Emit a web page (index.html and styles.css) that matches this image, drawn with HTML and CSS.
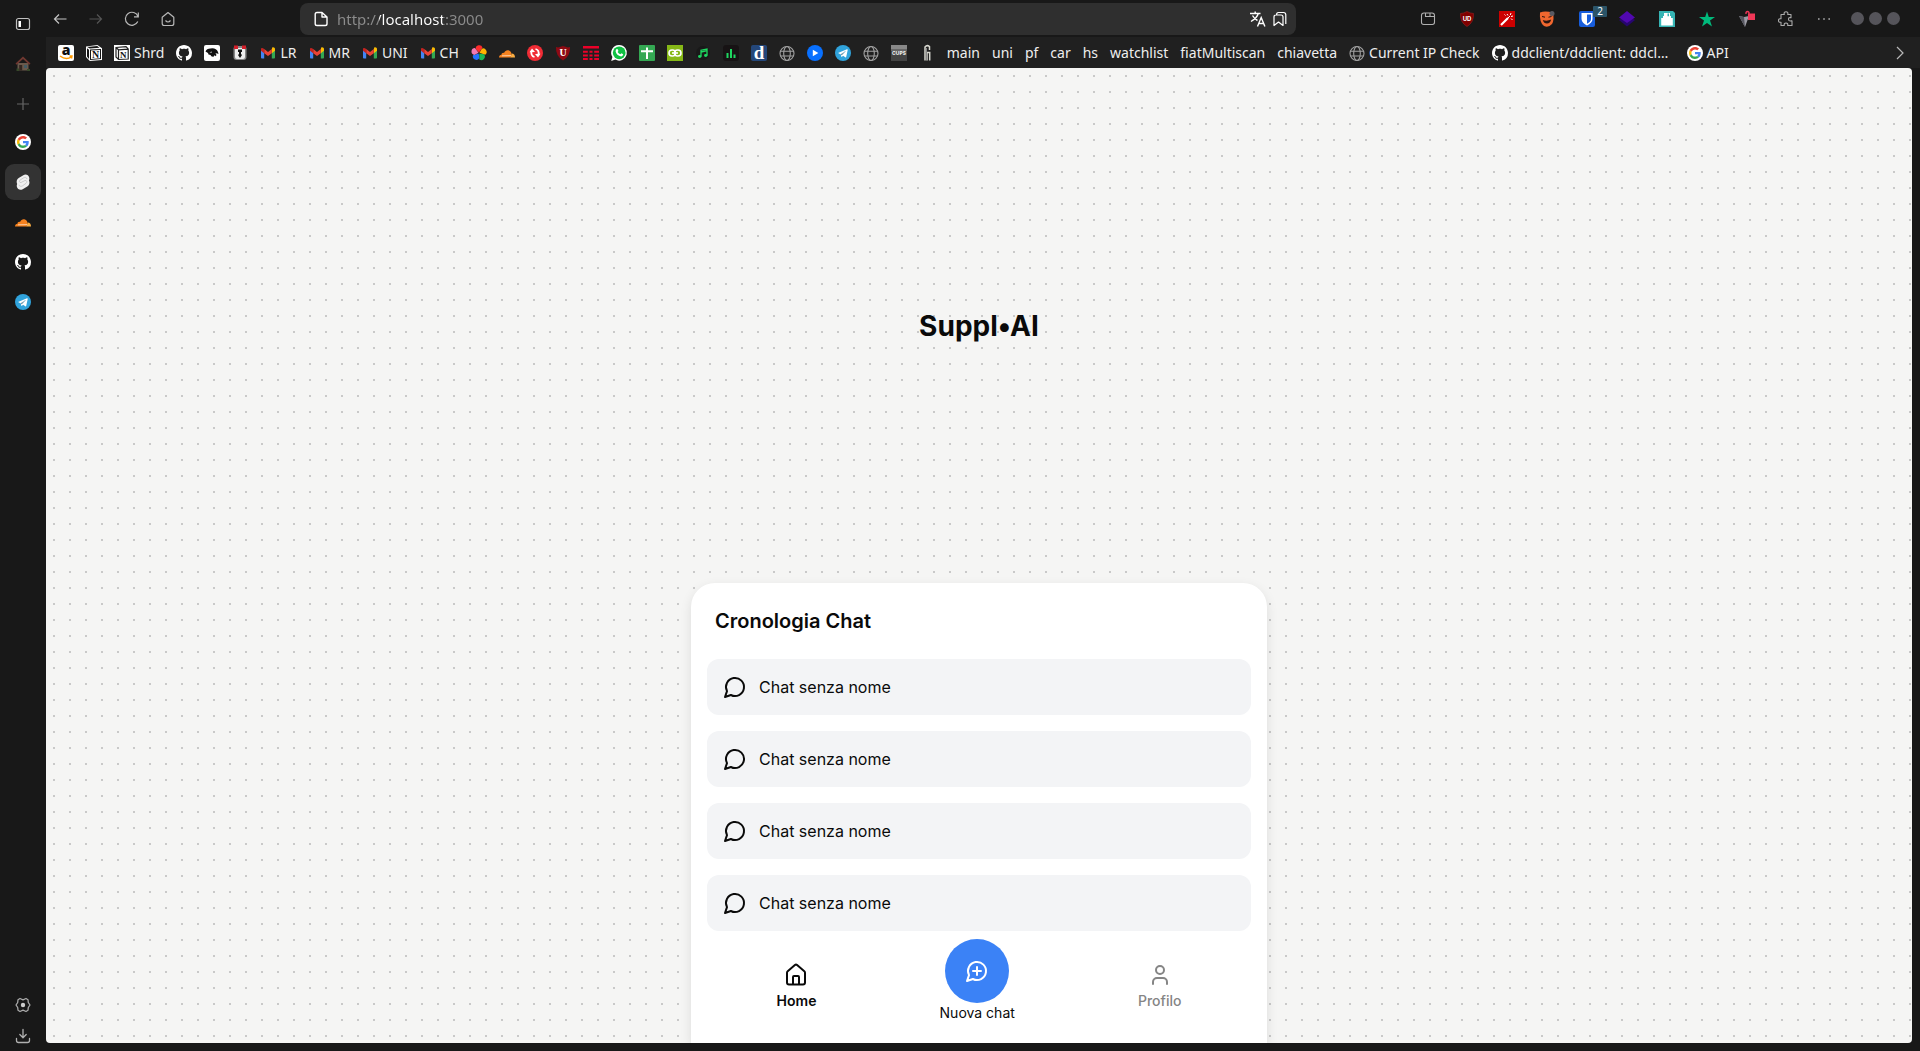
FILE: index.html
```html
<!DOCTYPE html>
<html lang="it">
<head>
<meta charset="utf-8">
<meta name="viewport" content="width=device-width, initial-scale=1">
<title>Suppl•AI</title>
<link rel="stylesheet" href="styles.css">
</head>
<body>
<svg class="sprite" aria-hidden="true">
  <symbol id="i-github" viewBox="0 0 16 16"><path fill="#fff" d="M8 0C3.58 0 0 3.58 0 8c0 3.54 2.29 6.53 5.47 7.59.4.07.55-.17.55-.38 0-.19-.01-.82-.01-1.49-2.01.37-2.53-.49-2.69-.94-.09-.23-.48-.94-.82-1.13-.28-.15-.68-.52-.01-.53.63-.01 1.08.58 1.23.82.72 1.21 1.87.87 2.33.66.07-.52.28-.87.51-1.07-1.78-.2-3.64-.89-3.64-3.95 0-.87.31-1.59.82-2.15-.08-.2-.36-1.02.08-2.12 0 0 .67-.21 2.2.82.64-.18 1.32-.27 2-.27s1.36.09 2 .27c1.53-1.04 2.2-.82 2.2-.82.44 1.1.16 1.92.08 2.12.51.56.82 1.27.82 2.15 0 3.07-1.87 3.75-3.65 3.95.29.25.54.73.54 1.48 0 1.07-.01 1.93-.01 2.2 0 .21.15.46.55.38A8.01 8.01 0 0 0 16 8c0-4.42-3.58-8-8-8z"/></symbol>
  <symbol id="i-google" viewBox="0 0 64 64"><circle cx="32" cy="32" r="32" fill="#fff"/><g transform="translate(8 8)"><path fill="#EA4335" d="M24 9.5c3.54 0 6.71 1.22 9.21 3.6l6.85-6.85C35.9 2.38 30.47 0 24 0 14.62 0 6.51 5.38 2.56 13.22l7.98 6.19C12.43 13.72 17.74 9.5 24 9.5z"/><path fill="#4285F4" d="M46.98 24.55c0-1.57-.15-3.09-.38-4.55H24v9.02h12.94c-.58 2.96-2.26 5.48-4.78 7.18l7.73 6c4.51-4.18 7.09-10.36 7.09-17.65z"/><path fill="#FBBC05" d="M10.53 28.59c-.48-1.45-.76-2.99-.76-4.59s.27-3.14.76-4.59l-7.98-6.19C.92 16.46 0 20.12 0 24s.92 7.54 2.56 10.78l7.97-6.19z"/><path fill="#34A853" d="M24 48c6.48 0 11.93-2.13 15.89-5.81l-7.73-6c-2.15 1.45-4.92 2.3-8.16 2.3-6.26 0-11.57-4.22-13.47-9.91l-7.98 6.19C6.51 42.62 14.62 48 24 48z"/></g></symbol>
  <symbol id="i-gmail" viewBox="0 0 16 16"><path fill="#4285F4" d="M1 3.5v9.2c0 .5.4.8.8.8h2.4V7z"/><path fill="#34A853" d="M15 3.5v9.2c0 .5-.4.8-.8.8h-2.4V7z"/><path fill="#FBBC04" d="M11.8 4v4.2L15 5.700V4.200c0-1.600-1.700-2.400-2.900-1.500z"/><path fill="#EA4335" d="M4.200 4v4.200L8 11l3.800-2.800V4L8 6.900z"/><path fill="#C5221F" d="M1 4.200v1.500l3.200 2.500V4l-.4-.3C2.600 2.700 1 2.700 1 4.200z"/></symbol>
  <symbol id="i-cloud" viewBox="0 0 16 16"><path fill="#F6821F" d="M0 12.500c0-1.600 1-2.700 2.500-2.800C2.500 8.300 3.900 7.500 5 8c1-2.300 2.600-3 4.300-2.700 1.800.3 3 1.700 3.200 3.500l-.9 3.700z"/><path fill="#FBAD41" d="M12.700 8.500c2 0 3.300 1.600 3.300 4h-4.600z"/><path stroke="#fff" stroke-width=".6" d="m3 10.800 9-.2"/></symbol>
  <symbol id="i-telegram" viewBox="0 0 16 16"><circle cx="8" cy="8" r="8" fill="#30A3DC"/><path fill="#fff" d="m3 8 9-3.700c.5-.2.8.1.700.7l-1.500 7c-.1.500-.5.600-.9.300L8 10.700l-1.200 1.200c-.3.200-.5.100-.5-.3l-.3-2z"/><path stroke="#A9D5EC" stroke-width=".8" d="m6 9.300 4.500-3L7 10"/></symbol>
  <symbol id="i-globe" viewBox="0 0 16 16"><g fill="none" stroke="#a0a0a0" stroke-width="1.100"><circle cx="8" cy="8.500" r="7"/><ellipse cx="8" cy="8.500" rx="3.300" ry="7"/><path d="M1.500 6.200h13M1.500 11h13"/></g></symbol>
  <symbol id="i-chat" viewBox="0 0 24 24"><path fill="none" stroke="currentColor" stroke-width="2" stroke-linecap="round" stroke-linejoin="round" d="M7.900 20A9 9 0 1 0 4 16.100L2 22Z"/></symbol>
</svg>

<aside class="sidebar">
  <button class="tool" aria-label="Barra laterale"><svg class="ico" viewBox="0 0 16 16"><rect x="1.500" y="2.500" width="13" height="11" rx="2" fill="none" stroke="#c0c0c0" stroke-width="1.200"/><path fill="#fff" d="M3.500 5H6v6H3.500z"/></svg></button>
  <button class="tool" aria-label="Casa"><svg class="ico dim" viewBox="0 0 16 16"><path fill="#b99a80" d="M2.500 7h11v7.500h-11z"/><path fill="#c8584a" d="M8 .5 15.500 7.500l-1.200 1.200L8 3 1.700 8.700.5 7.500z"/><path fill="#4f3528" d="M4.200 9h3v5.500h-3z"/><path fill="#6f9db0" d="M9 9h3v3H9z"/><path fill="#567a3c" d="M1.500 12.500H4V15H1.500zM12 13h3v2h-3z"/></svg></button>
  <button class="tool" aria-label="Nuova scheda"><svg class="ico" viewBox="0 0 16 16"><path stroke="#666" stroke-width="1.200" d="M8 2v12M2 8h12"/></svg></button>
  <nav class="tabs" aria-label="Schede">
    <button class="tab" aria-label="Google"><svg class="ico"><use href="#i-google"/></svg></button>
    <button class="tab active" aria-label="Suppl•AI"><svg class="ico" viewBox="0 0 16 16"><path fill="#f0f0f0" d="M8.300 1.200c2.300-1.300 5.300-.4 5.900 2.300.3 1.200.1 2-.3 2.900.7 1.400.6 2.500.3 3.700-.3 1.100-1 1.800-1.900 2.300l-4.600 2.800c-2.500 1.300-5.200.3-5.800-2.400-.3-1.200-.1-2 .3-2.900-.7-1.400-.6-2.500-.3-3.700.3-1 .9-1.600 1.800-2.200z"/><path fill="none" stroke="#bbb" stroke-width=".7" d="M12 5c-.5-1.800-2-2-3.200-1.300L5 6.100c-1.200.9-.5 2.900 1 2.400l4-2c2-.4 2.400 1.800 1 2.800L7.300 12c-1.500.7-3 .2-3.300-1.200"/></svg></button>
    <button class="tab" aria-label="Cloudflare"><svg class="ico"><use href="#i-cloud"/></svg></button>
    <button class="tab" aria-label="GitHub"><svg class="ico"><use href="#i-github"/></svg></button>
    <button class="tab" aria-label="Telegram"><svg class="ico"><use href="#i-telegram"/></svg></button>
  </nav>
  <div class="sidebar-end">
    <button class="end-tool" aria-label="Impostazioni"><svg class="ico" viewBox="0 0 16 16"><path fill="none" stroke="#aaa" stroke-width="1.300" stroke-linejoin="round" d="M5 1.500 8 2.800l3-1.300 2 1.200.3 2.800L15 8l-1.700 2.500-.3 2.800-2 1.200-3-1.300-3 1.300-2-1.200-.3-2.800L1 8l1.700-2.500L3 2.700z"/><circle cx="8" cy="8" r="2.200" fill="#ccc"/></svg></button>
    <button class="end-tool" aria-label="Download"><svg class="ico" viewBox="0 0 16 16"><path fill="none" stroke="#b0b0b0" stroke-width="1.300" stroke-linecap="round" stroke-linejoin="round" d="M8 1.500v8M4.800 6.500 8 9.700l3.200-3.200M1.500 10.500v2q0 2 2 2h9q2 0 2-2v-2"/></svg></button>
  </div>
</aside>

<div class="window">
  <header class="toolbar">
    <div class="nav-buttons">
      <button aria-label="Indietro"><svg class="ico" viewBox="0 0 16 16"><path fill="none" stroke="#c4c4c4" stroke-width="1.200" d="M14.500 8h-12M7 3.500 2.500 8 7 12.500"/></svg></button>
      <button aria-label="Avanti"><svg class="ico" viewBox="0 0 16 16"><path fill="none" stroke="#555" stroke-width="1.200" d="M1.500 8h12M9 3.500 13.500 8 9 12.500"/></svg></button>
      <button aria-label="Ricarica"><svg class="ico" viewBox="0 0 16 16"><path fill="none" stroke="#b8b8b8" stroke-width="1.200" d="M13.800 10.500A6.500 6.500 0 1 1 14 5.500M14.300 1.500v4.300H10"/></svg></button>
      <button aria-label="Home"><svg class="ico" viewBox="0 0 16 16"><path fill="none" stroke="#b8b8b8" stroke-width="1.200" stroke-linejoin="round" d="M2.200 6.200 8 1.500l5.800 4.700v6.300q0 2-2 2H4.200q-2 0-2-2zM5.500 9.500q2.500 3 5 0"/></svg></button>
    </div>
    <div class="address">
      <svg class="ico" viewBox="0 0 16 16"><path fill="none" stroke="#fff" stroke-width="1.400" stroke-linejoin="round" d="M4 1.500h5L14 6v6.700q0 1.800-1.800 1.800H4q-1.800 0-1.800-1.800V3.300Q2.200 1.500 4 1.500zM9 1.500V6h5"/></svg>
      <input class="url" type="text" value="http://localhost:3000" aria-label="Indirizzo">
      <button aria-label="Traduci"><svg class="ico" viewBox="0 0 16 16"><path fill="none" stroke="#fff" stroke-width="1.400" d="M0 2.500h10.500M5.200.5v2M8.300 2.500Q7 7 1 10.500M2.500 4.500q2 3.500 5 5M7.500 15.500l3.700-9 3.700 9M8.700 12.500h5"/></svg></button>
      <button aria-label="Segnalibri"><svg class="ico" viewBox="0 0 16 16"><path fill="none" stroke="#fff" stroke-width="1.200" stroke-linejoin="round" d="M2 14.500V6q0-2 2-2h5q2 0 2 2v8.500L6.500 11zM4.500 4q0-2.500 2-2.500h5q2.300 0 2.300 2.300V13"/></svg></button>
    </div>
    <div class="extensions">
      <button class="narrow" aria-label="Raccolte"><svg class="ico" viewBox="0 0 16 16"><path fill="none" stroke="#b0b0b0" stroke-width="1.100" d="M4 2h8q2.500 0 2.500 2.500v6.800q0 2.200-2.200 2.200H3.700q-2.200 0-2.200-2.200V4.500Q1.500 2 4 2zM5.500 2v3.500h9M10 2v3.500"/></svg></button>
      <button aria-label="uBlock"><svg class="ico" viewBox="0 0 16 16"><path fill="#800000" stroke="#9a2020" stroke-width=".6" d="M8 .5Q11 2.300 14.500 2.500q.5 9-6.500 13-7-4-6.500-13Q5 2.300 8 .5z"/><text x="8" y="10" text-anchor="middle" font-family="Inter, sans-serif" font-weight="700" font-size="6" fill="#fff">UD</text></svg></button>
      <button aria-label="Bacchetta"><svg class="ico" viewBox="0 0 16 16"><path fill="#c00" d="M0 0h16v16H0z"/><path stroke="#fff" stroke-width="2.200" d="m2 14 7-7"/><path stroke="#fff" d="m9 7 2-2M8 3l1 1.500M12 2l-.7 2M14 5l-2 .5M13.500 9 12 7.500M5.500 3.500l1 1"/></svg></button>
      <button aria-label="Maschera"><svg class="ico" viewBox="0 0 16 16"><path fill="#F0672F" d="M1 1.500Q7-.5 14 2q1.500 7-1 11-3.500 4-8 2Q.2 11.500 1 1.500z"/><path fill="none" stroke="#2a1510" stroke-width="1" d="m3 5.500 3 .7M9.500 6.200l3-.7"/><path fill="#2a1510" d="M3.800 9q4.200 1.500 8.400-.5-1 4-4.200 4T3.800 9z"/><circle cx="13" cy="2.500" r="2.500" fill="#5a5a62"/></svg></button>
      <button class="with-badge" aria-label="Bitwarden, 2 elementi"><svg class="ico" viewBox="0 0 16 16"><rect width="16" height="16" rx="2" fill="#175DDC"/><path fill="#fff" d="M2.500 2h11v6c0 3-2.500 5-5.500 6.500C5 13 2.500 11 2.500 8z"/><path fill="#175DDC" d="M8 3.500h4V8c0 2-1.700 3.500-4 4.800z"/></svg><span class="badge">2</span></button>
      <button aria-label="Livelli"><svg class="ico" viewBox="0 0 16 16"><path fill="#27066f" d="m8 4 8 5-8 6.500L0 9z"/><path fill="#5108b0" d="m8 0 8 6.500L8 12 0 6.500z"/></svg></button>
      <button aria-label="Salva"><svg class="ico" viewBox="0 0 16 16"><path fill="#36B4B4" d="M0 0h14l2 2v14H0z"/><path fill="#fff" d="M2.200 7h11.600v7.500H2.200zM4 5h8v3H4z"/><path fill="#fff" d="M5 2h6v4H5z"/><path fill="#36B4B4" d="M8.500 2.500H10v2.800H8.500z"/></svg></button>
      <button aria-label="Preferiti"><svg class="ico" viewBox="0 0 16 16"><path fill="#00BA7C" d="m8 .5 1.800 5.600H16l-5 3.500 2 6L8 12l-5 3.600 2-6L0 6.100h6.200z"/></svg></button>
      <button aria-label="Sblocco"><svg class="ico" viewBox="0 0 16 16"><path fill="#9b9ba4" d="m0 5 5 1 5-1-4 11z"/><path fill="#55555e" d="m0 5 5 1 1 10z"/><path fill="#f03757" d="M9 2.500h7V9H9z"/><path fill="none" stroke="#f03757" stroke-width="1.300" d="M10 3V1.500Q8.500-.5 7 1.500V3"/></svg></button>
      <button class="narrow" aria-label="Estensioni"><svg class="ico" viewBox="0 0 16 16"><path fill="none" stroke="#aaa" stroke-width="1.100" stroke-linejoin="round" d="M3 3.500h3.300Q5.500.8 8 .8t1.700 2.700H13v3.200q-2.500-.5-2.500 1.500T13 9.900h1v4.600H9.700q.5-2.500-1.700-2.500t-1.700 2.500H3v-3.300q-2.500.5-2.500-1.700T3 7.800z"/></svg></button>
      <button class="narrow" aria-label="Altro"><svg class="ico" viewBox="0 0 16 16"><path fill="#aaa" d="M2 7.200h1.600v1.600H2zm5.200 0h1.600v1.600H7.200zm5.200 0H14v1.600h-1.600z"/></svg></button>
    </div>
    <div class="window-buttons">
      <button aria-label="Riduci"></button><button aria-label="Ingrandisci"></button><button aria-label="Chiudi"></button>
    </div>
  </header>

  <nav class="bookmarks" aria-label="Segnalibri">
    <a href="#" aria-label="Amazon"><svg class="ico" viewBox="0 0 16 16"><rect width="16" height="16" rx="2" fill="#fff"/><text x="8" y="10" text-anchor="middle" font-family="Open Sans, sans-serif" font-weight="800" font-size="14" fill="#111">a</text><path fill="none" stroke="#f90" stroke-width="1.400" d="M2 11q6 4.500 11.500.8M11.500 11h2.500l-.5 2.500"/></svg></a>
    <a href="#" aria-label="Notion"><svg class="ico" viewBox="0 0 16 16"><path fill="#fff" d="M0 1.500 11.500 0 16 3.200V15L3.800 16 0 12z"/><path fill="#161616" d="m1.300 2 9.900-.9 2.300 1.600-9.700.7zM1 3.200l2 1.500v9.200l-2-2.300zM4 4.600l11-.7v10.200L4 15z"/><path fill="#fff" d="m5 5.500 9-.6v8.400l-9 .7z"/><text x="9.500" y="13" text-anchor="middle" font-family="Liberation Serif, serif" font-weight="700" font-size="10" fill="#111">N</text></svg></a>
    <a href="#"><svg class="ico" viewBox="0 0 16 16"><path fill="#fff" d="M0 0h16v16H0z"/><path fill="none" stroke="#222" stroke-width="1.200" d="m2 2.500 10-.8L14.200 4v10l-9.700.5L2 12zM4.500 4.800l9.500-.6M4.500 4.800v9.700M2 2.500l2.500 2.300"/><text x="9.300" y="12.500" text-anchor="middle" font-family="Liberation Serif, serif" font-weight="700" font-size="9" fill="#111">N</text></svg>Shrd</a>
    <a href="#" aria-label="GitHub"><svg class="ico"><use href="#i-github"/></svg></a>
    <a href="#" aria-label="Cavallo"><svg class="ico" viewBox="0 0 16 16"><rect width="16" height="16" rx="2" fill="#fff"/><path fill="#111" d="M1.500 6.500Q2.500 3.500 6.500 3.500q5.500-1 7.500 3.500l.5 2q-1.500-1-3-.8 1.500 1.500.5 3l-1.500-1-1 1.500Q7 12 6.500 10L4.500 9.500 4 8z"/><path fill="#fff" d="m5.500 7.500 2-1 .5 1z"/></svg></a>
    <a href="#" aria-label="Robot"><svg class="ico" viewBox="0 0 16 16"><rect x="1.500" y="1" width="13" height="14" rx="3" fill="#888"/><rect x="3" y="3" width="10" height="11" rx="2" fill="#eee"/><path fill="#d3202b" d="M2 .5h4v3.500H2zM10 .5h4v3.500h-4z"/><path fill="#111" d="M6 4.500h4V7H9v2l1 1-2 3-2-3 1-1V7H6z"/></svg></a>
    <a href="#"><svg class="ico"><use href="#i-gmail"/></svg>LR</a>
    <a href="#"><svg class="ico"><use href="#i-gmail"/></svg>MR</a>
    <a href="#"><svg class="ico"><use href="#i-gmail"/></svg>UNI</a>
    <a href="#"><svg class="ico"><use href="#i-gmail"/></svg>CH</a>
    <a href="#" aria-label="Foto"><svg class="ico" viewBox="0 0 16 16"><path fill="#ff2b2b" d="M8 7.500 4.700 4A3.500 3.500 0 0 1 11.500 2.600z"/><path fill="#ffb400" transform="rotate(72 8 8)" d="M8 7.500 4.700 4A3.500 3.500 0 0 1 11.500 2.600z"/><path fill="#1db954" transform="rotate(144 8 8)" d="M8 7.500 4.700 4A3.500 3.500 0 0 1 11.500 2.600z"/><path fill="#2372ff" transform="rotate(216 8 8)" d="M8 7.500 4.700 4A3.500 3.500 0 0 1 11.500 2.600z"/><path fill="#f07ab4" transform="rotate(288 8 8)" d="M8 7.500 4.700 4A3.500 3.500 0 0 1 11.500 2.600z"/></svg></a>
    <a href="#" aria-label="Cloudflare"><svg class="ico"><use href="#i-cloud"/></svg></a>
    <a href="#" aria-label="Sincronia"><svg class="ico" viewBox="0 0 16 16"><circle cx="8" cy="8" r="8" fill="#f02c35"/><path fill="none" stroke="#fff" stroke-width="1.800" d="M7.500 12q-4-1-3-6M8.500 4q4 1 3 6"/><path fill="#fff" d="M2.500 7.200 5 3.500 8 7zM13.500 8.800 11 12.500 8 9z"/></svg></a>
    <a href="#" aria-label="Scudo"><svg class="ico" viewBox="0 0 16 16"><path fill="#8e0a13" d="m1 2 2 .5L8 1l5 1.500L15 2q.5 9-7 13.500Q.5 11 1 2z"/><text x="8" y="11" text-anchor="middle" font-family="Liberation Serif, serif" font-weight="700" font-size="10" fill="#fff">U</text></svg></a>
    <a href="#" aria-label="TIM"><svg class="ico" viewBox="0 0 16 16"><path fill="#eb0028" d="M0 1h16v2.600H0zM0 5.700h4.800v2.100H0zm6.500 0h3v2.100h-3zm4.700 0H16v2.100h-4.800zM0 9.500h4.800v2H0zm6.500 0h3v2h-3zm4.700 0H16v2h-4.800zM0 13h4.800v2H0zm6.500 0h3v2h-3zm4.700 0H16v2h-4.800z"/></svg></a>
    <a href="#" aria-label="WhatsApp"><svg class="ico" viewBox="0 0 16 16"><path fill="#fff" d="M8.200 0a7.800 7.800 0 1 1-3.900 14.600L.2 16l1.200-4A7.800 7.800 0 0 1 8.200 0z"/><circle cx="8.200" cy="7.800" r="6.400" fill="#0fc143"/><path fill="#fff" d="M5 4.500q1.300-1.200 2 .2l.4 1.200-.8 1q1.200 2 2.800 2.400l1-1 1.800 1q-.2 2-2 2.100Q5.500 10.500 4.600 6.200z"/></svg></a>
    <a href="#" aria-label="Fogli"><svg class="ico" viewBox="0 0 16 16"><rect width="16" height="16" rx="1" fill="#34a853"/><path fill="#fff" d="M2 5.200h12v2H2zM7 2.500h2v11.500H7z"/></svg></a>
    <a href="#" aria-label="Catena"><svg class="ico" viewBox="0 0 16 16"><path fill="#86b817" d="M0 0h16v16H0z"/><g fill="none" stroke="#fff" stroke-width="1.600"><rect x="2" y="5" width="6.500" height="6" rx="3"/><rect x="7.500" y="5" width="6.500" height="6" rx="3"/><path d="M5 8h6"/></g></svg></a>
    <a href="#" aria-label="Musica"><svg class="ico" viewBox="0 0 16 16"><circle cx="8" cy="8" r="7" fill="#191919"/><path fill="none" stroke="#1ed760" stroke-width="1.300" d="M6 11.500V5.200L12 4v6.500M6 7l6-1.300"/><g fill="#1ed760"><ellipse cx="4.700" cy="11.500" rx="1.700" ry="1.400"/><ellipse cx="10.700" cy="10.500" rx="1.700" ry="1.400"/></g></svg></a>
    <a href="#" aria-label="Statistiche"><svg class="ico" viewBox="0 0 16 16"><rect width="16" height="16" rx="3" fill="#171314"/><path fill="#1ed760" d="M3.500 8h2v5h-2zM7 4h2v9H7zM10.500 9.500h2V13h-2z"/></svg></a>
    <a href="#" aria-label="Dizionario"><svg class="ico" viewBox="0 0 16 16"><rect width="16" height="16" rx="2" fill="#24477a"/><text x="8" y="14" text-anchor="middle" font-family="Liberation Serif, serif" font-weight="700" font-size="19" fill="#fff">d</text></svg></a>
    <a href="#" aria-label="Sito"><svg class="ico"><use href="#i-globe"/></svg></a>
    <a href="#" aria-label="Video"><svg class="ico" viewBox="0 0 16 16"><circle cx="8" cy="8" r="8" fill="#0870ff"/><path fill="#fff" d="m5.800 4.800 5.500 3.200-5.500 3.200z"/></svg></a>
    <a href="#" aria-label="Telegram"><svg class="ico"><use href="#i-telegram"/></svg></a>
    <a href="#" aria-label="Sito"><svg class="ico"><use href="#i-globe"/></svg></a>
    <a href="#" aria-label="CUPS"><svg class="ico" viewBox="0 0 16 16"><path fill="#444" d="M0 0h16v16H0z"/><path fill="#888" d="M0 0h16v4H0z"/><path fill="#666" d="M0 4h16v2H0z"/><text x="8" y="10" text-anchor="middle" font-family="Inter, sans-serif" font-weight="800" font-size="5" fill="#eee">CUPS</text></svg></a>
    <a href="#" aria-label="G"><svg class="ico" viewBox="0 0 16 16"><path fill="none" stroke="#d8d8d0" stroke-width="1.500" d="M10.500 5V1.500Q8-.5 6 2v13.500M8 15.500v-8h2.700v8"/><path stroke="#888" d="M7.500 3v12"/></svg></a>
    <a href="#">main</a>
    <a href="#">uni</a>
    <a href="#">pf</a>
    <a href="#">car</a>
    <a href="#">hs</a>
    <a href="#">watchlist</a>
    <a href="#">fiatMultiscan</a>
    <a href="#">chiavetta</a>
    <a href="#"><svg class="ico"><use href="#i-globe"/></svg>Current IP Check</a>
    <a class="long" href="#"><svg class="ico"><use href="#i-github"/></svg>ddclient/ddclient: ddcl…</a>
    <a href="#"><svg class="ico"><use href="#i-google"/></svg>API</a>
    <button class="more" aria-label="Altri segnalibri"><svg class="ico" viewBox="0 0 16 16"><path fill="none" stroke="#b8b8b8" stroke-width="1.200" d="m5 2 6 6-6 6"/></svg></button>
  </nav>

  <div class="page">
    <div class="hero"><h1>Suppl•AI</h1></div>
    <main class="card">
      <h2>Cronologia Chat</h2>
      <div class="chats">
        <button class="chat"><svg class="ico-lg"><use href="#i-chat"/></svg>Chat senza nome</button>
        <button class="chat"><svg class="ico-lg"><use href="#i-chat"/></svg>Chat senza nome</button>
        <button class="chat"><svg class="ico-lg"><use href="#i-chat"/></svg>Chat senza nome</button>
        <button class="chat"><svg class="ico-lg"><use href="#i-chat"/></svg>Chat senza nome</button>
      </div>
      <nav class="dock" aria-label="Navigazione">
        <a class="dock-link current" href="#"><svg class="ico-lg" viewBox="0 0 24 24"><path fill="none" stroke="currentColor" stroke-width="2" stroke-linejoin="round" stroke-linecap="round" d="M15 21.500V14a1 1 0 0 0-1-1h-4a1 1 0 0 0-1 1v7.500M3 9.700a2 2 0 0 1 .7-1.500l7.200-6.100a1.700 1.700 0 0 1 2.200 0l7.200 6.100a2 2 0 0 1 .7 1.500v9.800a2 2 0 0 1-2 2H5a2 2 0 0 1-2-2z"/></svg>Home</a>
        <a class="dock-new" href="#"><span class="dock-circle"><svg class="ico-lg" viewBox="0 0 24 24"><path fill="none" stroke="currentColor" stroke-width="2" stroke-linecap="round" stroke-linejoin="round" d="M7.900 20A9 9 0 1 0 4 16.100L2 22ZM8 12h8M12 8v8"/></svg></span>Nuova chat</a>
        <a class="dock-link" href="#"><svg class="ico-lg" viewBox="0 0 24 24"><path fill="none" stroke="currentColor" stroke-width="2" stroke-linecap="round" stroke-linejoin="round" d="M19 21v-2a4 4 0 0 0-4-4H9a4 4 0 0 0-4 4v2"/><circle cx="12" cy="7" r="4" fill="none" stroke="currentColor" stroke-width="2"/></svg>Profilo</a>
      </nav>
    </main>
  </div>
</div>
</body>
</html>
```

FILE: styles.css
```css
*, *::before, *::after { box-sizing: border-box; }

body {
  margin: 0;
  display: flex;
  height: 100vh;
  background: #181818;
  color: #eee;
  font: 15px/20px "Noto Sans", sans-serif;
}

button {
  border: 0;
  padding: 0;
  background: none;
  color: inherit;
  font: inherit;
  cursor: pointer;
}

a { color: inherit; text-decoration: none; }

.sprite { position: absolute; width: 0; height: 0; }
.ico { display: block; flex: none; width: 16px; height: 16px; overflow: visible; }
.ico-lg { display: block; flex: none; width: 24px; height: 24px; }
.dim { opacity: .5; }

/* Vertical tab strip */
.sidebar {
  display: flex;
  flex-direction: column;
  align-items: center;
  flex: none;
  width: 46px;
  padding-top: 4px;
}
.tool, .tab, .end-tool { display: grid; place-items: center; width: 36px; }
.tool { height: 40px; }
.tabs { display: flex; flex-direction: column; gap: 4px; }
.tab { height: 36px; border-radius: 9px; }
.tab.active { background: #333; }
.sidebar-end { margin-top: auto; }
.end-tool { height: 31px; }

/* Browser window */
.window {
  display: flex;
  flex-direction: column;
  flex: 1;
  min-width: 0;
  padding-bottom: 8px;
}
.toolbar { display: flex; align-items: center; flex: none; height: 37px; }
.toolbar button { display: grid; place-items: center; }
.nav-buttons { display: flex; gap: 20px; margin: 0 124px 0 6px; }
.address {
  display: flex;
  align-items: center;
  gap: 6px;
  flex: 1;
  min-width: 0;
  height: 32px;
  padding: 0 8px 0 13px;
  border-radius: 8px;
  background: #2f2f2f;
}
.url {
  flex: 1;
  min-width: 0;
  border: 0;
  padding: 0 0 0 2px;
  outline: 0;
  font: inherit;
  color: transparent;
  background: linear-gradient(90deg, #8c8c8c 44px, #fff 44px 108px, #8c8c8c 108px);
  -webkit-background-clip: text;
  background-clip: text;
}
.extensions { display: flex; margin-left: 113px; }
.extensions button { width: 40px; }
.extensions .narrow { width: 38px; }
.with-badge { position: relative; }
.badge {
  position: absolute;
  top: -5px;
  right: 0;
  width: 14px;
  height: 11px;
  border-radius: 1px;
  background: #2b5468;
  color: #fff;
  font-size: 10px;
  line-height: 11px;
}
.window-buttons { display: flex; gap: 5px; margin: 0 20px 0 8px; }
.window-buttons button { width: 13px; height: 13px; border-radius: 50%; background: #55545a; }

.bookmarks {
  display: flex;
  align-items: center;
  gap: 12px;
  flex: none;
  height: 31px;
  padding: 0 12px;
  background: #202020;
  font-size: 14px;
  white-space: nowrap;
}
.bookmarks a { display: flex; align-items: center; gap: 4px; }
.bookmarks .long { width: 183px; }
.more { margin-left: auto; }

/* Web page */
.page {
  display: flex;
  flex-direction: column;
  align-items: center;
  flex: 1;
  min-height: 0;
  margin-right: 8px;
  border-radius: 4px;
  overflow: hidden;
  background: #f5f5f4 conic-gradient(from 270deg at 2px 2px, #c9c9c9 90deg, transparent 0) 7px 7px / 16px 16px;
  color: #0a0a0a;
  font-family: Inter, sans-serif;
}
.hero { display: grid; place-items: center; flex: 1; }
h1 { margin: 0; font-size: 28px; line-height: 36px; font-weight: 700; }

.card {
  flex: none;
  width: 100%;
  max-width: 576px;
  border-radius: 24px 24px 0 0;
  background: #fff;
  box-shadow: 0 4px 12px rgb(0 0 0 / 10%);
}
h2 { margin: 0; padding: 24px 24px 0; font-size: 20px; line-height: 28px; font-weight: 600; }
.chats { display: flex; flex-direction: column; gap: 16px; padding: 24px 16px 0; }
.chat {
  display: flex;
  align-items: center;
  gap: 12px;
  height: 56px;
  padding: 0 16px;
  border-radius: 12px;
  background: #f3f4f6;
  font-size: 16px;
  line-height: 24px;
}
.dock {
  display: flex;
  justify-content: space-around;
  align-items: flex-start;
  padding: 8px 24px 20px;
  font-size: 14px;
  line-height: 20px;
}
.dock-link, .dock-new { display: flex; flex-direction: column; align-items: center; }
.dock-link { gap: 4px; padding-top: 24px; color: #858585; font-weight: 500; }
.dock-link.current { color: #0a0a0a; font-weight: 600; }
.dock-circle {
  display: grid;
  place-items: center;
  width: 64px;
  height: 64px;
  border-radius: 50%;
  background: #3b82f6;
  color: #fff;
}
```
